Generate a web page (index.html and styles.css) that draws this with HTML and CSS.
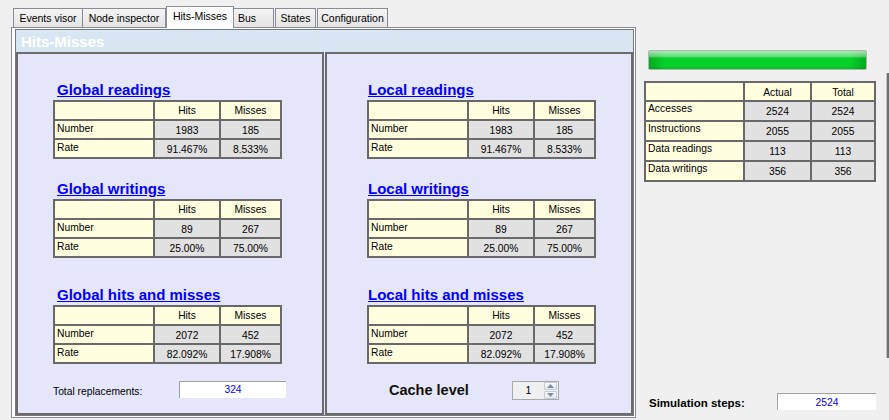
FILE: index.html
```html
<!DOCTYPE html>
<html lang="en">
<head>
<meta charset="utf-8">
<title>Hits-Misses</title>
<link rel="stylesheet" href="styles.css">
</head>
<body>
<div class="window">
  <div class="main">
    <nav class="tabs">
      <div class="tab tab-events">Events visor</div>
      <div class="tab tab-node">Node inspector</div>
      <div class="tab tab-sel">Hits-Misses</div>
      <div class="tab tab-bus">Bus</div>
      <div class="tab tab-states">States</div>
      <div class="tab tab-config">Configuration</div>
    </nav>
    <div class="page">
      <div class="group">
        <div class="group-title">Hits-Misses</div>
        <div class="panels">
          <div class="panel panel-left">
            <section class="block block-1">
              <h2 class="block-title">Global readings</h2>
              <div class="grid">
                <div class="cell head"></div><div class="cell head">Hits</div><div class="cell head">Misses</div>
                <div class="cell label">Number</div><div class="cell val">1983</div><div class="cell val">185</div>
                <div class="cell label">Rate</div><div class="cell val">91.467%</div><div class="cell val">8.533%</div>
              </div>
            </section>
            <section class="block block-2">
              <h2 class="block-title">Global writings</h2>
              <div class="grid">
                <div class="cell head"></div><div class="cell head">Hits</div><div class="cell head">Misses</div>
                <div class="cell label">Number</div><div class="cell val">89</div><div class="cell val">267</div>
                <div class="cell label">Rate</div><div class="cell val">25.00%</div><div class="cell val">75.00%</div>
              </div>
            </section>
            <section class="block block-3">
              <h2 class="block-title">Global hits and misses</h2>
              <div class="grid">
                <div class="cell head"></div><div class="cell head">Hits</div><div class="cell head">Misses</div>
                <div class="cell label">Number</div><div class="cell val">2072</div><div class="cell val">452</div>
                <div class="cell label">Rate</div><div class="cell val">82.092%</div><div class="cell val">17.908%</div>
              </div>
            </section>
            <div class="footer">
              <span class="footer-label">Total replacements:</span>
              <div class="textbox textbox-repl">324</div>
            </div>
          </div>
          <div class="panel panel-right">
            <section class="block block-1">
              <h2 class="block-title">Local readings</h2>
              <div class="grid">
                <div class="cell head"></div><div class="cell head">Hits</div><div class="cell head">Misses</div>
                <div class="cell label">Number</div><div class="cell val">1983</div><div class="cell val">185</div>
                <div class="cell label">Rate</div><div class="cell val">91.467%</div><div class="cell val">8.533%</div>
              </div>
            </section>
            <section class="block block-2">
              <h2 class="block-title">Local writings</h2>
              <div class="grid">
                <div class="cell head"></div><div class="cell head">Hits</div><div class="cell head">Misses</div>
                <div class="cell label">Number</div><div class="cell val">89</div><div class="cell val">267</div>
                <div class="cell label">Rate</div><div class="cell val">25.00%</div><div class="cell val">75.00%</div>
              </div>
            </section>
            <section class="block block-3">
              <h2 class="block-title">Local hits and misses</h2>
              <div class="grid">
                <div class="cell head"></div><div class="cell head">Hits</div><div class="cell head">Misses</div>
                <div class="cell label">Number</div><div class="cell val">2072</div><div class="cell val">452</div>
                <div class="cell label">Rate</div><div class="cell val">82.092%</div><div class="cell val">17.908%</div>
              </div>
            </section>
            <div class="footer">
              <span class="cache-label">Cache level</span>
              <div class="spinner">
                <span class="spinner-value">1</span>
                <div class="spinner-buttons">
                  <div class="spin-btn"><svg width="7" height="4" viewBox="0 0 7 4"><polygon points="0,4 3.5,0 7,4" fill="#7b8ea9"/></svg></div>
                  <div class="spin-btn"><svg width="7" height="4" viewBox="0 0 7 4"><polygon points="0,0 3.5,4 7,0" fill="#7b8ea9"/></svg></div>
                </div>
              </div>
            </div>
          </div>
        </div>
      </div>
    </div>
  </div>
  <aside class="side">
    <div class="side-content">
      <div class="progress"></div>
      <div class="grid grid-stats">
        <div class="cell head"></div><div class="cell head">Actual</div><div class="cell head">Total</div>
        <div class="cell label">Accesses</div><div class="cell val">2524</div><div class="cell val">2524</div>
        <div class="cell label">Instructions</div><div class="cell val">2055</div><div class="cell val">2055</div>
        <div class="cell label">Data readings</div><div class="cell val">113</div><div class="cell val">113</div>
        <div class="cell label">Data writings</div><div class="cell val">356</div><div class="cell val">356</div>
      </div>
      <div class="sim-row">
        <span class="sim-label">Simulation steps:</span>
        <div class="textbox textbox-sim">2524</div>
      </div>
    </div>
    <div class="edge"></div>
  </aside>
</div>
</body>
</html>
```

FILE: styles.css
```css
* { box-sizing: border-box; }
html, body { margin: 0; padding: 0; }
body {
  background: #f0f0f0;
  font-family: "Liberation Sans", Arial, sans-serif;
  font-size: 10.3px;
  color: #000;
  width: 889px;
  height: 420px;
  overflow: hidden;
}
.window { display: flex; height: 420px; }

/* ---------- tabs ---------- */
.main { width: 637px; padding-left: 11px; }
.tabs {
  display: flex;
  align-items: flex-end;
  height: 27px;
  margin-left: 2px;
}
.tab {
  height: 19px;
  border: 1px solid #898c95;
  border-bottom: none;
  background: linear-gradient(#f4f4f4, #e4e4e4);
  font-size: 10.5px;
  line-height: 13px;
  padding-top: 3px;
  text-align: center;
  white-space: nowrap;
}
.tab-events { width: 70px; }
.tab-node { width: 83px; border-left: none; }
.tab-sel {
  width: 68px;
  height: 22px;
  margin-bottom: -1px;
  background: #fff;
  position: relative;
  z-index: 1;
}
.tab-bus { width: 40px; border-left: none; text-align: left; padding-left: 4px; margin-right: 1px; }
.tab-states { width: 41px; margin-right: 1px; }
.tab-config { width: 71px; }

/* ---------- page ---------- */
.page {
  width: 625px;
  height: 391px;
  border: 1px solid #898c95;
  background: #fff;
  padding: 1px 0 0 3px;
}
.group {
  width: 619px;
  height: 387px;
  border: 1px solid #7a7a7a;
  background: #e6e6fa;
  display: flex;
  flex-direction: column;
}
.group-title {
  height: 22px;
  flex: none;
  background: #d8e5f2;
  color: #fff;
  font-weight: bold;
  font-size: 15px;
  line-height: 21px;
  padding: 1px 0 0 5px;
}
.panels { display: flex; gap: 1px; flex: 1; }
.panel {
  width: 308px;
  border: 2px solid #6b6b6b;
  display: flex;
  flex-direction: column;
  align-items: flex-start;
  padding-top: 27px;
}
.panel-left { padding-left: 35px; }
.panel-right { padding-left: 40px; }

.block-2 { margin-top: 21px; }
.block-3 { margin-top: 28px; }
.block-title {
  margin: 0 0 2px 4px;
  font-size: 15px;
  line-height: 17px;
  font-weight: bold;
  color: #0000ff;
  text-decoration: underline;
  white-space: nowrap;
}
.panel-right .block-title { margin-left: 1px; }

/* ---------- grids ---------- */
.grid {
  display: grid;
  width: max-content;
  grid-template-columns: 98px 64px 59px;
  grid-template-rows: 17px 17px 17px;
  gap: 2px;
  padding: 2px;
  background: #696969;
}
.cell { line-height: 13px; white-space: nowrap; overflow: hidden; }
.head { background: #ffffe0; text-align: center; padding-top: 2px; }
.label { background: #ffffe0; padding: 1px 0 0 2px; }
.val { background: #e1e1e1; text-align: center; padding-top: 3px; }

.grid-stats {
  grid-template-columns: 97px 65px 62px;
  grid-template-rows: 17px 18px 18px 18px 18px;
  margin-top: 11px;
}
.grid-stats .head { padding-top: 3px; }
.grid-stats .label { padding-top: 0; }

/* ---------- footers ---------- */
.footer { display: flex; align-items: flex-start; margin-top: 17px; }
.footer-label { width: 126px; line-height: 13px; margin-top: 4px; white-space: nowrap; }
.textbox {
  height: 17px;
  background: #fff;
  border-top: 1px solid #a0a0a0;
  border-left: 1px solid #a0a0a0;
  color: #0000ff;
  text-align: center;
  line-height: 15px;
}
.textbox-repl { width: 107px; }

.cache-label {
  width: 123px;
  margin-left: 22px;
  margin-top: 1px;
  font-size: 14.5px;
  line-height: 17px;
  font-weight: bold;
  color: #111;
  white-space: nowrap;
}
.spinner {
  width: 47px;
  height: 19px;
  border: 1px solid #a9a9a9;
  background: #f0f0f0;
  display: flex;
}
.spinner-value {
  width: 31px;
  text-align: center;
  line-height: 13px;
  padding-top: 2px;
  font-size: 10.5px;
}
.spinner-buttons {
  width: 13px;
  display: flex;
  flex-direction: column;
  gap: 1px;
}
.spin-btn {
  flex: 1;
  border: 1px solid #c3cbd6;
  border-radius: 1px;
  background: linear-gradient(#f8f9fb, #e4e9ef);
  display: flex;
  align-items: center;
  justify-content: center;
}

/* ---------- side ---------- */
.side { width: 252px; display: flex; }
.side-content {
  width: 232px;
  margin-left: 7px;
  display: flex;
  flex-direction: column;
  padding-top: 50px;
  padding-bottom: 10px;
}
.progress {
  width: 219px;
  height: 20px;
  margin-left: 4px;
  border: 1px solid #b2b2b2;
  border-radius: 2px;
  background:
    linear-gradient(to bottom, rgba(255,255,255,0.65) 0, rgba(255,255,255,0.35) 30%, rgba(255,255,255,0) 40%, rgba(0,0,0,0) 80%, rgba(0,0,0,0.08) 100%),
    linear-gradient(to right, rgba(0,60,0,0.25) 0, rgba(0,0,0,0) 7%, rgba(0,0,0,0) 93%, rgba(0,60,0,0.25) 100%),
    #06d02a;
}
.sim-row { display: flex; align-items: flex-start; margin-top: auto; }
.sim-label {
  width: 133px;
  padding-left: 5px;
  margin-top: 3px;
  font-size: 11.5px;
  line-height: 14px;
  font-weight: bold;
  white-space: nowrap;
}
.textbox-sim { width: 99px; padding-top: 1px; }
.edge {
  width: 3px;
  height: 285px;
  margin-left: 10px;
  margin-top: 73px;
  border-left: 1px solid #c4c4c4;
  background: #707070;
}
```
